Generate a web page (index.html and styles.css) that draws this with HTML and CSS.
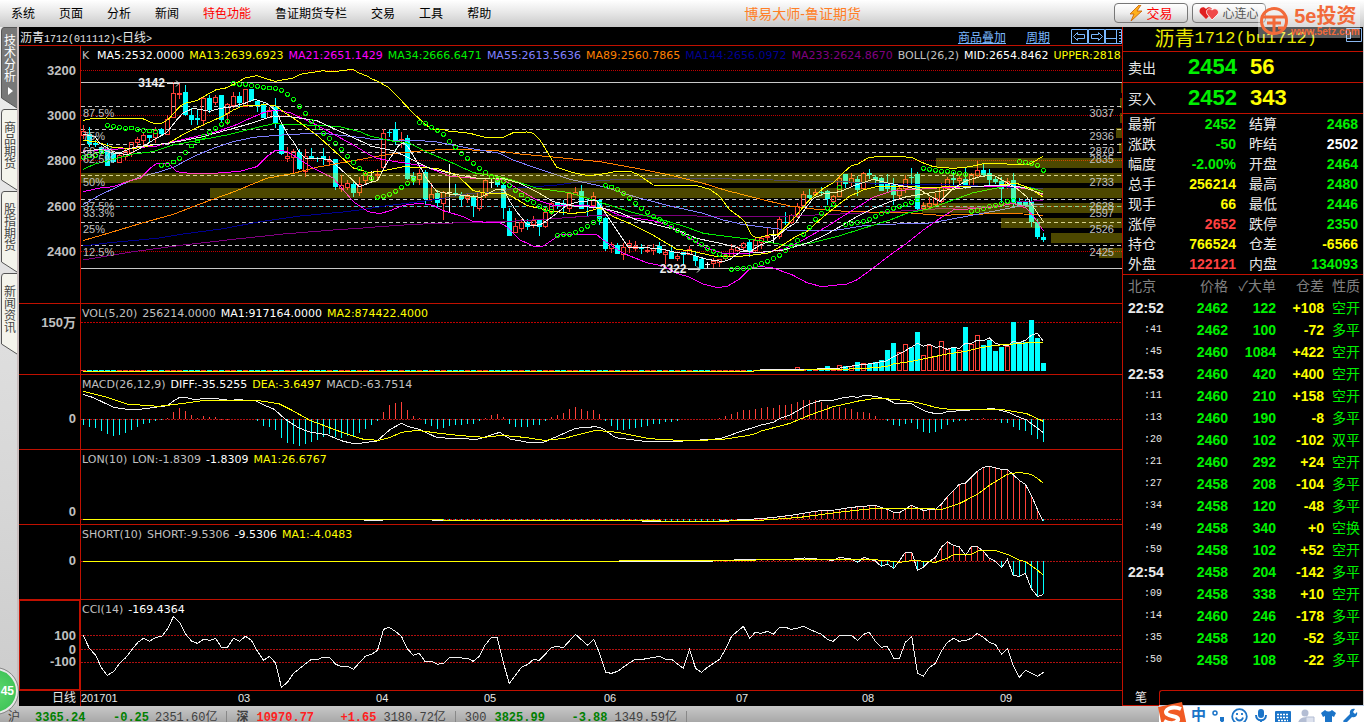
FILE: index.html
```html
<!DOCTYPE html>
<html lang="zh-CN">
<head>
<meta charset="utf-8">
<title>博易大师-鲁证期货</title>
<link rel="stylesheet" href="styles.css">
</head>
<body>
<div class="app">
  <header class="menubar">
    <nav class="menu">
      <button>系统</button><button>页面</button><button>分析</button><button>新闻</button><button class="hot">特色功能</button><button>鲁证期货专栏</button><button>交易</button><button>工具</button><button>帮助</button>
    </nav>
    <h1 class="app-title">博易大师-鲁证期货</h1>
    <div class="actions">
      <button class="pill trade"><svg width="14" height="16" viewBox="0 0 14 16"><path d="M10 0 1 9h4l-3 7 11-10H8l4-6z" fill="#ffb01c" stroke="#c45a00" stroke-width=".8"/></svg>交易</button>
      <button class="pill"><svg width="20" height="14" viewBox="0 0 20 14"><path d="M7 13 1 7C-1 3 4-1 7 3c3-4 8 0 6 4z" fill="#e02020"/><path d="M13 14 8 8c-2-4 2-7 5-4 3-3 8 0 6 4z" fill="#f04848" stroke="#fff" stroke-width=".8"/></svg>心连心</button>
    </div>
    <div class="watermark">
      <svg width="30" height="30" viewBox="0 0 30 30"><circle cx="15" cy="15" r="12.500" fill="none" stroke="#f26a3a" stroke-width="3"/><path d="M2 11h24M8 17h14M15 11v15M19 22h5" stroke="#f26a3a" stroke-width="3" fill="none"/></svg>
      <div><b>5e投资</b><span>www.5etz.com</span></div>
    </div>
  </header>

  <aside class="tabs">
    <button class="tab active"><svg viewBox="0 0 17 82" preserveAspectRatio="none"><path d="M17 .5H4Q1.500 .5 1.500 4V71L17 81"/></svg><span>技术分析</span><i></i></button>
    <button class="tab"><svg viewBox="0 0 17 82" preserveAspectRatio="none"><path d="M17 .5H4Q1.500 .5 1.500 4V71L17 81"/></svg><span>商品期货</span></button>
    <button class="tab"><svg viewBox="0 0 17 82" preserveAspectRatio="none"><path d="M17 .5H4Q1.500 .5 1.500 4V71L17 81"/></svg><span>股指期货</span></button>
    <button class="tab"><svg viewBox="0 0 17 82" preserveAspectRatio="none"><path d="M17 .5H4Q1.500 .5 1.500 4V71L17 81"/></svg><span>新闻资讯</span></button>
    <div class="ball">45</div>
  </aside>

  <main class="chart">
    <div class="chart-head">
      <div class="symbol">沥青<span>1712(011112)&lt;</span>日线<span>&gt;</span></div>
      <div class="links"><a href="#overlay">商品叠加</a><a href="#period">周期</a></div>
      <svg class="head-icons" width="51" height="15" viewBox="0 0 51 15" fill="none" stroke="#7ab8ff"><path d="M.5.5h16v14H.5zM17.500.5h16v14h-16zM34.500.5h16v14h-16zM2.500 7.500l4-4v2h7v4h-7v2zM31.500 7.500l-4-4v2h-7v4h7v2zM34 9.500h11M45.500 1v13M48 3.500h2M48 6.500h2M48 9.500h2M48 12.500h2"/></svg>
    </div>

    <section class="pane k">
      <div class="axis"><b style="top:9.700%">3200</b><b style="top:27.200%">3000</b><b style="top:44.700%">2800</b><b style="top:62.600%">2600</b><b style="top:80.200%">2400</b></div>
      <div class="plot">
        <svg id="kline" viewBox="0 -42 3123 771" preserveAspectRatio="none"></svg>
        <p class="legend"><span class="k-name">K</span><span class="w">MA5:2532.0000</span><span class="y">MA13:2639.6923</span><span class="m">MA21:2651.1429</span><span class="g">MA34:2666.6471</span><span class="v">MA55:2613.5636</span><span class="o">MA89:2560.7865</span><span class="n">MA144:2656.0972</span><span class="p">MA233:2624.8670</span><span>BOLL(26,2)</span><span class="w">MID:2654.8462</span><span class="y">UPPER:2818.1352</span></p>
        <div id="levels"></div>
        <span class="mark high">3142<svg width="13" height="7" viewBox="0 0 13 7"><path d="M0 3.500h12M9 .5l3 3-3 3" fill="none" stroke="#ddd"/></svg></span>
        <span class="mark low">2322<svg width="13" height="7" viewBox="0 0 13 7"><path d="M0 3.500h12M9 .5l3 3-3 3" fill="none" stroke="#ddd"/></svg></span>
      </div>
    </section>
    <section class="pane">
      <div class="axis"><b style="top:27%">150万</b></div>
      <div class="plot"><svg id="volume" viewBox="0 12 3123 210" preserveAspectRatio="none"></svg>
        <p class="legend"><span>VOL(5,20)</span><span>256214.0000</span><span class="w">MA1:917164.0000</span><span class="y">MA2:874422.4000</span></p></div>
    </section>
    <section class="pane">
      <div class="axis"><b style="top:60%">0</b></div>
      <div class="plot"><svg id="macd" viewBox="0 225 3123 222" preserveAspectRatio="none"></svg>
        <p class="legend"><span>MACD(26,12,9)</span><span class="w">DIFF:-35.5255</span><span class="y">DEA:-3.6497</span><span>MACD:-63.7514</span></p></div>
    </section>
    <section class="pane">
      <div class="axis"><b style="top:84%">0</b></div>
      <div class="plot"><svg id="lon" viewBox="0 450 3123 222" preserveAspectRatio="none"></svg>
        <p class="legend"><span>LON(10)</span><span>LON:-1.8309</span><span class="w">-1.8309</span><span class="y">MA1:26.6767</span></p></div>
    </section>
    <section class="pane">
      <div class="axis"><b style="top:49%">0</b></div>
      <div class="plot"><svg id="short" viewBox="0 15 3123 222" preserveAspectRatio="none"></svg>
        <p class="legend"><span>SHORT(10)</span><span>SHORT:-9.5306</span><span class="w">-9.5306</span><span class="y">MA1:-4.0483</span></p></div>
    </section>
    <section class="pane">
      <div class="axis selected"><b style="top:40%">100</b><b style="top:55%">0</b><b style="top:69%">-100</b></div>
      <div class="plot"><svg id="cci" viewBox="0 240 3123 270" preserveAspectRatio="none"></svg>
        <p class="legend"><span>CCI(14)</span><span class="w">-169.4364</span></p></div>
    </section>
    <div class="timeline">
      <div class="axis">日线</div>
      <div class="plot" id="months"></div>
    </div>
  </main>

  <section class="quote">
    <h2 class="contract">沥青<span>1712(bu1712)</span><svg width="16" height="14" viewBox="0 0 16 14"><path d="M.5.5h15v13H.5zM1 10.500h4M4.500 4v6" fill="none" stroke="#8cb8f0"/></svg></h2>
    <div class="depth"><span>卖出</span><b>2454</b><b class="y">56</b></div>
    <div class="depth"><span>买入</span><b>2452</b><b class="y">343</b></div>
    <table class="stats">
      <tr><th>最新</th><td class="g">2452</td><th>结算</th><td class="g">2468</td></tr>
      <tr><th>涨跌</th><td class="g">-50</td><th>昨结</th><td class="w">2502</td></tr>
      <tr><th>幅度</th><td class="g">-2.00%</td><th>开盘</th><td class="g">2464</td></tr>
      <tr><th>总手</th><td class="y">256214</td><th>最高</th><td class="g">2480</td></tr>
      <tr><th>现手</th><td class="y">66</td><th>最低</th><td class="g">2446</td></tr>
      <tr><th>涨停</th><td class="r">2652</td><th>跌停</th><td class="g">2350</td></tr>
      <tr><th>持仓</th><td class="y">766524</td><th>仓差</th><td class="y">-6566</td></tr>
      <tr><th>外盘</th><td class="r">122121</td><th>内盘</th><td class="g">134093</td></tr>
    </table>
    <table class="ticks">
      <thead><tr><th>北京</th><th>价格</th><th>✓大单</th><th>仓差</th><th>性质</th></tr></thead>
      <tbody id="ticks"></tbody>
    </table>
    <div class="quote-foot"><button>笔</button><div></div></div>
  </section>

  <footer class="status">
    <span class="i1">沪</span><b class="up i2">3365.24</b><b class="up i3">-0.25</b><b class="i4">2351.60亿</b><i></i><b>深</b><b class="dn i5">10970.77</b><b class="dn i6">+1.65</b><b class="i4">3180.72亿</b><i></i><b class="i4">300</b><b class="up i7">3825.99</b><b class="up i8">-3.88</b><b class="i4">1349.59亿</b><i></i>
  </footer>

  <div class="ime">
    <svg class="ime-logo" width="29" height="24" viewBox="0 0 29 24"><path d="M0 5 24 0l5 24H4z" fill="#f15a24"/><path d="M23 7C14 3 5 8 9 12c4 3 12 2 11 6-2 4-9 4-14 1" fill="none" stroke="#fff" stroke-width="4"/></svg>
    <b>中</b>
    <svg width="13" height="15" viewBox="0 0 13 15"><circle cx="3" cy="4" r="2" fill="none" stroke="#1b74c8" stroke-width="1.500"/><path d="M8 8h4v4l-3 3-1-1 1-2H8z" fill="#1b74c8"/></svg>
    <svg width="17" height="17" viewBox="0 0 17 17" fill="none" stroke="#1b74c8" stroke-width="1.800"><circle cx="8.500" cy="8.500" r="7.300"/><path d="M5 9.500c1 4 6 4 7 0M6 5v2M11 5v2"/></svg>
    <svg width="14" height="17" viewBox="0 0 14 17" fill="none" stroke="#1b74c8" stroke-width="2"><rect x="5" y="2" width="4" height="7" rx="2" fill="#1b74c8"/><path d="M2 7c0 7 10 7 10 0M7 12v4M4 16h6"/></svg>
    <svg width="18" height="14" viewBox="0 0 18 14"><rect x="1" y="2" width="16" height="12" rx="1" fill="#1b74c8"/><path d="M3 5.500h12M3 8.500h12M4 11.500h10" stroke="#fff" stroke-width="1.500" stroke-dasharray="2 1"/></svg>
    <svg width="17" height="17" viewBox="0 0 17 17"><circle cx="7" cy="5" r="3.500" fill="#b3bdd3"/><path d="M0 16c0-9 14-9 14 0z" fill="#b3bdd3"/><path d="M8 9h8v7H8z" fill="#dde2ee" stroke="#b3bdd3"/></svg>
    <svg width="15" height="15" viewBox="0 0 15 15"><path d="M0 4 4 1q3.500 3 7 0l4 3-2 4-2-1v8H4V7L2 8z" fill="#1b74c8"/></svg>
    <svg width="16" height="16" viewBox="0 0 16 16"><path d="M1 13 8 6C7 2 10 0 13 1l-2 3 2 2 2-2c1 4-2 6-5 5l-7 7z" fill="#1b74c8"/></svg>
  </div>
</div>
<script src="chart.js"></script>
</body>
</html>
```

FILE: styles.css
```css
* { box-sizing: border-box; }
html, body { margin: 0; height: 100%; }
body { background: #000; overflow: hidden; font: 12px "Liberation Sans", "Noto Sans CJK SC", sans-serif; }
button { border: 0; background: none; padding: 0; font: inherit; color: inherit; }
h1, h2, p { margin: 0; font-weight: 400; }

.app {
  position: relative;
  display: grid;
  height: 100vh;
  grid-template: 27px minmax(0, 1fr) 16px / 19px minmax(0, 1fr) 242px;
}

.w { color: #fff; }
.y { color: #ff0; }
.m { color: #f0f; }
.g { color: #00f000; }
.v { color: #8080ff; }
.o { color: #ff8000; }
.n { color: #000090; }
.p { color: #800080; }
.r { color: #ff4040; }

/* menu bar */
.menubar {
  grid-column: 1 / -1;
  position: relative;
  display: grid;
  grid-template-columns: auto 1fr auto;
  align-items: center;
  padding: 0 98px 2px 11px;
  background: linear-gradient(#fff, #e8e8e8 45%, #c8c8c8);
  color: #000;
}
.menu { display: flex; gap: 24px; white-space: nowrap; }
.menu .hot { color: #f00; }
.app-title { font-size: 14px; color: #ff7f27; text-align: center; }
.actions { display: flex; justify-content: flex-end; gap: 4px; }
.pill {
  display: flex;
  align-items: center;
  justify-content: center;
  gap: 3px;
  width: 74px;
  height: 20px;
  border: 1px solid #777;
  border-radius: 4px;
  background: linear-gradient(#fff, #eee 50%, #ccc);
  color: #555;
}
.trade { color: #f00; font-size: 13px; }
.watermark {
  position: absolute;
  z-index: 3;
  right: 4px;
  top: 4px;
  width: 102px;
  height: 34px;
  display: flex;
  align-items: center;
  gap: 2px;
  padding-left: 1px;
  background: rgba(255, 255, 255, .35);
  color: #f26a3a;
}
.watermark div { display: flex; flex-direction: column; align-items: center; }
.watermark b { font-size: 20px; line-height: 20px; }
.watermark span { font-size: 10px; line-height: 11px; font-weight: 700; }

/* side tabs */
.tabs {
  position: relative;
  display: flex;
  flex-direction: column;
  background: linear-gradient(#eee, #ccc);
  border-right: 2px solid #c8bcbc;
}
.tab {
  position: relative;
  display: flex;
  flex-direction: column;
  align-items: center;
  flex: none;
  height: 82px;
  padding: 13px 0 0 3px;
  color: #444;
}
.tab svg { position: absolute; inset: 0; width: 100%; height: 100%; fill: #f4f4ec; stroke: #555; }
.tab.active svg { fill: #787878; }
.tab.active { color: #fff; padding-top: 8px; }
.tab span { position: relative; width: 12px; line-height: 12px; }
.tab i { position: relative; border: 4px solid transparent; border-left: 5px solid #fff; margin: 4px 0 0 4px; }
.ball {
  position: absolute;
  left: -28px;
  bottom: -8px;
  width: 46px;
  height: 46px;
  padding-right: 2px;
  border-radius: 50%;
  border: 2px solid #e8e8e8;
  outline: 1px solid #888;
  background: radial-gradient(#5ed86e, #35bd50);
  color: #fff;
  font-weight: 700;
  line-height: 42px;
  text-align: right;
}

/* chart */
.chart {
  display: grid;
  grid-template-rows: 19px minmax(0, 258fr) minmax(0, 71fr) repeat(3, minmax(0, 75fr)) minmax(0, 91fr) 15px;
  min-width: 0;
  color: #c0c0c0;
}
.chart-head {
  display: flex;
  align-items: center;
  border-bottom: 1px solid #c01000;
  padding-left: 1px;
  color: #e8e8e8;
}
.head-icons { flex: none; }
.symbol { flex: 1; }
.symbol span { font: 10px "Liberation Mono", monospace; }
.links { display: flex; gap: 20px; margin-right: 21px; }
.links a { color: #7ab8ff; }
.pane { display: flex; min-height: 0; border-bottom: 1px solid #c01000; }
.axis { position: relative; flex: none; width: 62px; border-right: 1px solid #c01000; }
.axis.selected { box-shadow: inset 0 0 0 1px #c01000; }
.axis b { position: absolute; right: 4px; line-height: 14px; margin-top: -7px; font-size: 13px; }
.plot { position: relative; flex: 1; min-width: 0; overflow: hidden; }
.plot > svg { display: block; width: 100%; height: 100%; shape-rendering: crispEdges; }
.legend {
  position: absolute;
  left: 1px;
  top: 3px;
  display: flex;
  gap: 5px;
  font: 11px/14px "DejaVu Sans", sans-serif;
  white-space: nowrap;
}
.k-name { width: 10px; }
.level {
  position: absolute;
  margin-top: -7px;
  font: 11px/14px "Liberation Sans", sans-serif;
}
.level.left { left: 2px; }
.level.right { right: 8px; }
.mark {
  position: absolute;
  display: flex;
  align-items: center;
  gap: 2px;
  margin-top: -7px;
  color: #eee;
  font: 700 12px/14px "Liberation Sans", sans-serif;
}
.high { left: 5.500%; top: 14.500%; }
.low { left: 55.600%; top: 86.800%; }
.timeline { display: flex; line-height: 14px; color: #e8e8e8; }
.timeline .axis { text-align: right; padding-right: 4px; }
.timeline time { position: absolute; font-size: 11px; }

/* quote panel */
.quote {
  display: flex;
  flex-direction: column;
  min-width: 0;
  border-left: 1px solid #c01000;
  border-right: 1px solid #ccc;
  color: #e8e8e8;
  font-size: 14px;
}
.contract {
  display: flex;
  justify-content: flex-end;
  align-items: center;
  height: 25px;
  border-bottom: 1px solid #c01000;
  color: #e8e800;
  font-size: 20px;
  line-height: 24px;
}
.contract span { font: 17px/24px "Liberation Mono", monospace; }
.contract svg { margin: 0 1px 9px 29px; }
.depth {
  display: grid;
  grid-template-columns: 55px 52px 1fr;
  column-gap: 5px;
  align-items: center;
  height: 31px;
  padding-left: 5px;
  border-bottom: 1px solid #c01000;
  color: #e8e8e8;
}
.depth b { font-size: 22px; color: #00f000; }
.depth b.y { color: #ff0; padding-left: 5px; }
.stats, .ticks { border-collapse: collapse; table-layout: fixed; width: 100%; }
.stats th, .stats td, .ticks th, .ticks td { padding: 0; line-height: 18px; }
.stats { border-bottom: 1px solid #c01000; }
.stats tr { height: 20px; }
.stats th { width: 47px; padding-left: 5px; text-align: left; font-weight: 400; }
.stats td { width: 66px; text-align: right; font-weight: 700; }
.stats th:nth-child(3) { width: 60px; padding-left: 13px; }
.stats td:nth-child(4) { width: auto; padding-right: 5px; }
.ticks tr { height: 22px; }
.ticks th { color: #808080; font-weight: 400; text-align: right; }
.ticks td { text-align: right; font-weight: 700; color: #00f000; }
.ticks th:nth-child(1) { width: 45px; text-align: left; padding-left: 5px; }
.ticks th:nth-child(2) { width: 60px; }
.ticks th:nth-child(3) { width: 48px; }
.ticks th:nth-child(4) { width: 48px; }
.ticks th:nth-child(5), .ticks td:nth-child(5) { padding-right: 3px; font-weight: 400; }
.ticks td:nth-child(4) { color: #ff0; }
.ticks td:nth-child(1) { color: #e8e8e8; text-align: left; padding-left: 5px; white-space: nowrap; }
.ticks td.sec:nth-child(1) { font: 10px/18px "Liberation Mono", monospace; padding-left: 21px; }
.quote-foot { flex: none; display: flex; margin-top: auto; height: 16px; font-size: 12px; border-bottom: 1px solid #c01000; }
.quote-foot button { width: 36px; line-height: 14px; }
.quote-foot div { flex: 1; border: solid #c01000; border-width: 1px 0 0 1px; border-radius: 3px 0 0; }

/* status bar */
.status {
  grid-column: 1 / -1;
  display: flex;
  align-items: flex-start;
  overflow: hidden;
  padding: 5px 0 0 8px;
  background: linear-gradient(#c8c8c8, #a8a8a8);
  color: #404040;
  font: 12px/15px "Liberation Mono", "Noto Sans CJK SC", monospace;
  white-space: nowrap;
}
.status > i { width: 1px; height: 12px; margin: 0 9px; background: #888; flex: none; }
.status .up { color: #008000; }
.status .dn { color: #ff2020; }
.i1 { width: 27px; }
.i2 { width: 78px; }
.i3 { width: 42px; }
.status .i4 { font-weight: 400; }
.i5, .i7 { margin-left: 8px; }
.i5 { width: 84px; }
.i6 { width: 43px; }
.i7 { width: 77px; }
.i8 { width: 43px; }

/* input-method toolbar */
.ime {
  position: absolute;
  right: 0;
  bottom: -8px;
  z-index: 3;
  display: flex;
  align-items: center;
  gap: 6px;
  width: 205px;
  height: 25px;
  border-top: 1px solid #b8cce8;
  background: #fff;
  color: #1b74c8;
}
.ime b { font-size: 15px; line-height: 20px; margin-top: -6px; }
.ime svg { flex: none; margin-top: -4px; }
.ime .ime-logo { margin: -8px -2px 0 -1px; }
```

FILE: chart.js
```js
// Drawing units are thirds of a pixel; candles are 18 units apart.
const NS = 'http://www.w3.org/2000/svg';
const STEP = 18, FIRST = 7.5, WIDTH = 3123;
const RED = '#ff4038', CYAN = '#00ffff';
const xAt = i => FIRST + STEP * i;

function add(svg, name, attrs) {
  const el = document.createElementNS(NS, name);
  for (const k in attrs) el.setAttribute(k, attrs[k]);
  svg.appendChild(el);
}
const get = id => document.getElementById(id);
function hline(svg, y, stroke, dash) {
  add(svg, 'path', { d: `M0 ${y}H${WIDTH}`, stroke, 'stroke-width': 3, 'stroke-dasharray': dash || 'none' });
}
function box(svg, x, y, width, height, fill) {
  add(svg, 'rect', { x, y, width, height: Math.max(height, 3), fill });
}

// Each section is [x offset, x scale, y offset, "x,y x,y ..."].
function points(sections) {
  return sections.flatMap(([ox, sx, dy, text]) => text.split(' ').map(p => {
    const [x, y] = p.split(',').map(Number);
    return [ox + x * sx, y + dy];
  }));
}
function curve(svg, stroke, sections) {
  const pts = points(sections);
  add(svg, 'polyline', { points: pts.join(' '), fill: 'none', stroke, 'stroke-width': 3 });
  return pts;
}
function valueAt(pts, x) {
  for (let n = 1; n < pts.length; n++) {
    const [x0, y0] = pts[n - 1], [x1, y1] = pts[n];
    if (x <= x1 && x1 > x0) return y0 + (y1 - y0) * (x - x0) / (x1 - x0);
  }
  return pts[pts.length - 1][1];
}

// kind high bodyTop bodyBottom low
const candles = `r195,215,225,238 c200,222,253,262 c240,250,254,262 c258,262,276,282 c250,268,317,318 c275,280,307,308 r275,285,307,308 r265,274,290,300 r245,247,278,290 r230,238,248,262
r215,225,240,255 c224,226,234,245 r200,212,232,250 c205,208,222,224 r165,178,222,224 r65,100,172,175 r68,100,104,118 c75,96,166,168 c145,165,179,195 c150,174,180,195
r112,116,180,198 c105,115,150,158 r105,112,128,136 c104,105,179,185 r130,133,160,195 r95,108,135,145 c95,108,130,140 r86,88,138,140 c86,88,122,124 c120,124,135,155
c128,135,173,175 r140,150,172,175 c115,140,192,205 c190,194,283,286 r260,290,296,305 r268,275,293,342 c268,275,328,330 r268,290,335,350 c265,288,293,296 c290,293,298,305
c265,288,296,315 r288,300,303,318 c297,298,380,390 r345,375,384,395 r360,371,382,390 c362,372,398,412 r352,374,398,408 r335,340,362,372 w333,337,340,370 r328,343,346,358
r208,220,322,328 c210,216,220,232 c186,208,242,255 r215,238,242,265 c226,234,356,360 c335,348,360,375 r328,340,358,375 c330,336,418,432 r370,402,417,425 c390,398,428,440
r392,396,430,480 w312,397,400,458 c372,398,406,412 c395,402,417,437 r398,410,415,430 c405,410,438,470 r390,396,446,452 r358,362,406,415 w355,366,368,384 c355,360,374,380
c370,374,443,476 c445,453,527,528 r475,498,517,518 r478,487,506,515 c478,487,500,510 r468,480,492,505 c478,480,500,527 r445,457,500,503 r425,430,455,465 c425,430,434,446
c420,428,434,466 r395,400,446,455 r382,396,402,405 c376,394,446,448 c418,434,440,467 r396,410,436,448 c418,420,478,495 c470,474,567,572 r545,554,566,578 c550,556,581,582
r548,562,583,600 r540,550,560,580 r543,560,564,572 c552,562,566,582 r556,571,574,578 r552,566,568,585 c547,558,579,582 r570,576,584,612 c562,572,597,598 r582,590,595,604
c575,577,586,615 r558,568,584,586 c573,588,603,618 c590,596,626,628 w605,612,614,625 r595,604,610,624 r596,598,608,620 r580,586,594,600 r552,568,588,590 r558,562,570,576
r545,550,563,572 c540,546,575,590 r535,540,572,575 r530,534,548,568 r505,528,532,545 w510,525,528,548 r470,478,530,536 c456,486,490,496 r462,466,486,492 r430,440,468,475
r392,402,437,440 c388,404,414,420 r388,396,402,405 c382,396,400,408 c390,394,418,435 r405,410,425,432 r345,355,408,412 c342,343,372,384 r340,356,366,380 c348,357,389,408
r335,340,385,388 c328,338,344,356 c345,350,360,375 c352,355,392,394 c342,373,388,398 c355,373,405,435 r380,385,406,420 r345,358,385,400 c324,350,354,375 c335,342,446,455
r425,437,445,450 r410,430,440,448 r400,415,432,440 r370,382,425,428 r352,358,385,390 c335,354,360,375 r345,355,360,375 c320,358,380,388 r338,343,378,382 r302,330,345,352
c310,330,344,348 c328,338,360,375 c350,358,366,372 c350,364,388,430 r355,363,378,388 c338,360,432,444 c415,427,438,440 c418,426,434,440 c410,425,486,500 c478,486,530,536
c520,531,540,546`.split(/\s+/).map(s => [s[0], ...s.slice(1).split(',').map(Number)]);

function drawKline() {
  const svg = get('kline');
  [31, 166, 301, 439, 574].forEach(y => hline(svg, y, '#c00000', '3 3'));
  hline(svg, 439, '#60c8d0', '12 9');
  [139, 208, 253, 277, 346, 418, 487, 556].forEach(y => hline(svg, y, '#c8c8c8', '12 9'));
  [67, 625].forEach(y => hline(svg, y, '#c8c8c8'));

  candles.forEach(([kind, high, top, bottom, low], i) => {
    const x = xAt(i), h = Math.max(bottom - top, 4);
    const color = kind === 'r' ? RED : kind === 'c' ? CYAN : '#fff';
    if (kind === 'r') {
      add(svg, 'path', { d: `M${x} ${high}V${top}M${x} ${top + h}V${low}`, stroke: color, 'stroke-width': 3 });
      add(svg, 'rect', { x: x - 6, y: top, width: 12, height: h, fill: 'none', stroke: color, 'stroke-width': 3 });
    } else {
      box(svg, x - 1.5, high, 3, low - high, color);
      box(svg, x - 7.5, top, 15, kind === 'w' ? 3 : h, color);
    }
  });

  const A = -243, B = 867, C = 1977;
  const three = (color, a, b, c) => curve(svg, color, [[A, 1, 0, a], [B, 1, 0, b], [C, 1, 0, c]]);
  three('#000090', '249,558 330,548 470,535 550,522 670,506 780,485 900,468 1040,455 1105,446',
    '0,445 60,436 150,425 220,415 300,400 390,396 430,385 560,375 610,368 720,360 900,355 1000,355 1130,358',
    '0,358 100,360 200,364 330,366 450,372 600,374 770,380 910,385');
  three('#800080', '249,600 400,575 550,555 700,538 850,522 1000,510 1105,503',
    '0,502 130,493 280,488 420,484 520,478 700,465 850,466 1110,470',
    '0,469 150,468 300,462 450,455 620,445 750,440 830,425 910,422');
  three('#ff8000', '249,542 330,518 430,488 520,463 600,432 700,396 800,355 880,340 950,322 1060,302 1105,294',
    '0,292 80,280 160,272 230,268 380,272 450,282 560,292 690,305 800,325 900,345 1000,370 1080,395 1105,400',
    '0,402 80,422 150,438 230,448 330,455 500,458 600,466 700,463 790,460 850,462 910,466');
  three('#8080ff', '249,434 300,405 370,372 420,350 480,335 520,322 580,290 640,265 700,245 760,232 830,226 900,222 970,220 1040,228 1105,235',
    '0,237 60,240 130,240 200,246 300,265 390,280 430,300 500,325 600,358 700,380 800,412 900,438 1000,460 1060,480 1105,490',
    '0,492 60,500 150,511 280,512 380,496 470,492 560,490 620,480 700,465 780,450 840,438 910,432');
  three('#00f000', '249,328 285,312 340,298 400,282 460,275 520,255 600,240 680,225 760,205 820,191 880,194 960,196 1020,200 1080,215 1105,226',
    '0,228 60,242 120,250 180,280 250,310 310,338 400,352 500,385 600,398 700,430 780,455 860,475 940,498 1000,520 1100,533',
    '0,534 60,542 140,556 210,550 290,530 360,508 450,480 500,460 560,448 640,420 700,398 740,390 800,378 870,383 910,395');
  three('#f0f', '249,272 340,268 400,264 470,258 500,250 560,236 650,215 700,198 750,175 790,158 825,150 870,158 940,190 1000,222 1060,255 1105,282',
    '0,285 20,295 60,302 160,318 240,348 300,354 400,358 440,385 500,420 550,436 640,435 700,445 760,470 850,482 900,498 960,535 1000,560 1060,580 1105,580',
    '0,580 60,578 130,568 180,545 260,500 330,455 400,412 460,392 530,388 620,382 700,380 800,378 870,388 910,405');
  three('#f0f', '249,395 300,384 340,380 390,362 420,355 450,325 470,310 505,310 530,335 570,340 640,340 720,334 770,320 800,290 828,270 860,274 890,292 940,325 1000,355 1060,425 1105,455',
    '0,456 30,461 60,452 100,436 150,430 190,436 220,452 280,470 310,485 390,488 410,500 450,540 490,558 520,558 550,538 570,525 610,522 680,524 700,540 760,580 830,608 880,618 920,640 960,652 1000,672 1040,682 1070,680 1090,668 1108,658',
    '0,655 30,625 60,619 100,624 160,646 200,668 245,680 320,672 350,660 400,624 450,585 500,550 550,510 600,475 640,450 700,446 770,440 820,430 860,445 885,475 910,512');
  three('#ff0', '249,181 270,177 320,174 380,177 428,176 455,188 470,192 490,188 505,178 530,150 545,135 555,130 590,122 625,102 650,88 672,86 700,74 735,54 770,47 795,55 825,64 880,54 900,43 970,32 990,36 1060,28 1075,38 1105,50',
    '0,54 25,65 55,82 85,112 130,160 165,192 185,208 220,208 235,213 300,220 345,232 400,232 430,218 470,216 490,220 510,240 560,322 610,338 655,347 705,341 740,334 780,334 805,344 850,375 985,378 1020,388 1050,410 1080,450 1108,470',
    '0,472 15,485 35,525 50,534 100,522 112,525 140,498 170,465 205,423 250,385 280,368 310,338 335,316 350,314 385,293 420,289 480,290 515,292 540,305 580,320 640,325 690,320 735,310 800,312 840,313 870,312 910,288');
  three('#ff0', '249,242 285,244 340,262 400,266 460,255 505,250 545,226 580,208 620,190 670,168 700,150 735,135 760,138 790,134 825,136 850,155 900,188 950,225 1000,270 1060,324 1105,337',
    '0,337 30,334 70,326 100,320 140,322 200,325 230,335 260,344 310,392 350,400 410,402 430,412 470,436 540,453 600,460 640,458 690,444 730,470 790,495 850,526 920,568 960,572 1040,590 1100,590',
    '0,589 50,584 90,578 120,560 170,528 200,515 250,470 300,430 330,408 370,390 410,380 450,378 500,378 560,384 620,380 700,380 780,375 830,370 870,385 910,412');
  three('#f0f0f0', '249,274 300,268 350,282 400,262 450,255 505,250 600,232 700,205 760,188 820,168 870,170 950,182 1000,205 1050,228 1105,254',
    '0,258 70,272 130,300 180,325 250,342 330,356 400,356 450,370 500,395 550,425 620,440 690,442 750,458 800,480 860,495 920,510 980,535 1060,552 1100,562',
    '0,568 50,578 130,570 200,550 250,528 300,500 350,470 400,445 450,425 500,410 560,400 620,390 700,380 780,375 850,382 910,402');
  three('#f0f0f0', '249,222 285,230 300,250 340,275 380,285 420,265 460,240 500,218 530,180 550,158 580,145 630,154 660,145 690,142 740,128 765,118 800,130 828,152 845,190 865,226 880,245 900,280 915,294 990,298 1030,335 1060,362 1078,380 1105,370',
    '0,368 22,362 50,310 85,258 100,248 115,262 150,320 170,356 200,394 240,402 300,408 330,412 380,388 400,388 420,425 440,455 470,492 490,498 515,492 550,468 590,436 630,424 680,422 700,450 740,510 775,562 820,562 880,568 920,578 960,582 1010,598 1060,605 1080,598 1105,580',
    '0,576 30,575 60,555 100,540 140,505 165,490 200,440 220,415 250,402 300,395 340,378 400,358 440,368 500,380 540,390 600,425 640,385 680,362 720,350 760,345 790,362 830,385 860,410 910,485');

  // parabolic SAR
  const sar = [292, 288, 286, 276, 196, 199, 202, 205, 204, 208, 212, 213, 215, 316, 314, 306, 295, 278, 258, 243, 230, 217, 205, 193, 184,
    71, 73, 73, 77, 79, 82, 84, 85, 91, 103, 118, 139, 160, 184, 203, 220, 236, 251, 268, 289, 308, 325, 340, 355,
    412, 409, 403, 394, 382, 370, 358, 188, 190, 202, 211, 223, 245, 262, 281, 295, 310, 325, 338, 350, 358, 364, 376, 391, 405, 418, 428, 439, 448, 454,
    526, 523, 523, 517, 508, 499, 488, 478, 376, 381, 388, 400, 415, 430, 445, 457, 469, 478, 487, 499, 511, 520, 532, 541, 553, 565, 574, 583, 590,
    628, 626, 626, 622, 617, 611, 604, 596, 586, 572, 556, 542, 523, 502, 478, 460, 445, 433, 383,
    494, 490, 488, 484, 478, 469, 461, 454, 445, 439, 433, 427, 420, 325, 328, 331, 334, 334, 337, 340, 343,
    454, 452, 446, 440, 436, 430, 424, 422, 305, 307, 310, 316, 331];
  sar.forEach((cy, i) => add(svg, 'circle', { cx: xAt(i), cy, r: 6, fill: 'none', stroke: '#00ff00', 'stroke-width': 3 }));

  // volume-by-price bands
  [[0, 339], [387, 384], [2565, 294], [2522, 429], [2760, 474], [2910, 519], [3054, 564],
    [3120, 68], [3117, 113], [3117, 158], [3105, 204], [3114, 249]].forEach(([x, y]) =>
    box(svg, x, y, WIDTH - x, 30, 'rgba(255,240,0,.3)'));
}

function drawVolume() {
  const svg = get('volume');
  hline(svg, 67, '#c00000', '6 3');
  const tops = [210, 210, 208, 208, 208, 210, 202, 209, 209, 209, 209, 198, 207, 196, 198, 199, 186, 190, 193, 186, 180, 150, 129, 156, 133, 141, 96,
    166, 135, 169, 124, 146, 142, 151, 81, 133, 106, 135, 120, 153, 141, 138, 66, 127, 126, 60, 114, 189];
  candles.forEach(([kind], i) => {
    const top = i < 113 ? 210 : tops[i - 113], x = xAt(i);
    if (kind === 'r' && top < 205) {
      add(svg, 'rect', { x: x - 6, y: top + 1, width: 12, height: 211 - top, fill: 'none', stroke: RED, 'stroke-width': 3 });
    } else {
      box(svg, x - 7.5, top, 15, 213 - top, kind === 'r' ? RED : CYAN);
    }
  });
  curve(svg, '#f0f0f0', [[2037, 1, 0, '0,210 150,208 240,204 290,196 340,190 382,182 400,170 436,152 454,142 472,130 490,139 508,133 526,142 544,140 562,148 580,142 598,145 616,130 634,130 652,120 676,120 688,114 706,130 742,138 760,124 778,128 796,121 814,106 832,100 850,124']]);
  curve(svg, '#ff0', [[0, 1, 0, '7,214 2000,214'], [2037, 1, 0, '0,212 200,209 300,206 345,203 382,199 400,192 454,184 508,173 562,162 616,154 652,145 706,136 760,132 796,129 814,127 850,127']]);
}

function bars(svg, base, ends) {
  ends.forEach((y, i) => {
    const d = y - base;
    if (Math.abs(d) < 1) return;
    box(svg, xAt(i) - 1.5, d < 0 ? y : base, 3, Math.abs(d), d < 0 ? RED : CYAN);
  });
}

function drawMacd() {
  const svg = get('macd');
  hline(svg, 358, '#b01010', '6 3');
  const early = [165, 171, 174, 183, 192, 198, 195, 189, 180, 171, 162, 159, 153, 150, 144, 126, 114, 123, 135, 144, 138, 141, 141, 147, 148, 149, 149, 149, 149,
    155, 168, 171, 180, 204, 219, 222, 228, 222, 216, 210, 201, 192, 201, 204, 198, 200, 189, 177, 165, 153, 126, 105, 99, 96, 120, 138, 144,
    162, 168, 177, 174, 168, 165, 165, 162, 162, 153, 144, 135, 132, 141, 162, 171, 171, 171, 165, 165, 153, 141, 135, 129, 117, 111, 117, 123, 120, 132,
    155, 168, 180, 180, 177, 174, 171, 168, 162, 162, 156, 156, 153, 149, 149, 149, 149, 149, 149, 144, 138, 132, 126, 120, 120, 117].map(y => y + 209);
  const late = [324, 321, 324, 315, 315, 312, 306, 300, 300, 300, 306, 315, 324, 321, 324, 327, 336, 336, 339, 348, 358, 362, 374, 377, 371, 368,
    386, 395, 398, 395, 386, 374, 365, 362, 362, 359, 359, 354, 358, 359, 368, 368, 380, 389, 392, 404, 416, 425];
  bars(svg, 358, early.concat(late));
  curve(svg, '#f0f0f0', [[-63, 1.339, 210, '52,73 75,83 120,112 150,118 185,117 240,107 255,92 268,82 280,82 305,90 320,85 350,86 380,91 400,89 440,93 455,104 480,118 505,148 535,174 560,186 600,195 630,212 660,222 710,213 740,178 765,160 780,170 805,178 845,203 935,208 985,187 1010,208 1045,216 1085,216 1155,175 1200,170 1215,175 1245,203 1310,214 1400,213 1480,206 1530,182 1560,170'],
    [2037, 1, 0, '0,376 40,367 60,355 90,345 130,322 150,312 185,301 220,301 240,295 275,290 292,292 315,286 345,289 382,298 405,310 455,311 472,322 500,335 526,341 545,341 560,335 630,330 700,326 745,337 765,347 800,360 850,398']]);
  curve(svg, '#ff0', [[-63, 1.339, 210, '52,64 100,80 150,102 220,109 260,103 320,92 440,91 490,101 520,121 560,151 600,171 640,191 680,208 715,211 740,202 765,187 800,181 850,190 900,197 950,202 990,196 1040,202 1085,211 1130,205 1200,181 1250,187 1320,206 1400,212 1480,209 1540,197 1560,190'],
    [2037, 1, 0, '0,394 90,370 150,345 220,320 300,302 355,294 420,300 470,307 530,323 570,328 730,329 800,341 850,364']]);
}

function histogramOf(svg, base, sections) {
  const pts = points(sections);
  bars(svg, base, candles.map((_, i) => valueAt(pts, xAt(i))));
  curve(svg, '#f0f0f0', sections);
}

function drawLon() {
  const svg = get('lon');
  hline(svg, 658, '#b01010', '6 3');
  histogramOf(svg, 658, [[0, 1, 0, '7,658 830,658 860,661 1000,658 1080,661 1650,661 1700,664 1900,664'],
    [2037, 1, 0, '0,656 60,650 100,645 185,631 225,630 275,622 345,616 382,628 400,637 420,637 454,616 490,631 526,628 544,613 562,590 598,553 616,550 652,514 670,502 688,499 724,508 742,508 778,541 796,553 814,586 832,628 850,664']]);
  curve(svg, '#ff0', [[0, 1, 0, '7,658 1075,658 1090,661 1700,661 1760,664 1900,664'],
    [2037, 1, 0, '0,661 120,652 250,635 345,625 480,625 545,628 600,610 652,583 688,556 742,523 778,517 814,523 832,535 850,550']]);
}

function drawShort() {
  const svg = get('short');
  hline(svg, 124, '#b01010', '6 3');
  histogramOf(svg, 124, [[0, 1, 0, '7,124 1430,124'], [1437, 1.079, 0, '0,124 445,123 510,118 560,118 620,120 680,114 760,121 778,112 810,117 828,127 844,112 877,123 893,139 910,132 928,145 944,122 960,97 978,97 994,151 1010,142 1027,124 1044,112 1060,82 1077,65 1094,76 1110,80 1128,106 1144,79 1160,79 1177,94 1194,115 1210,124 1228,142 1244,118 1260,166 1277,169 1294,160 1310,205 1328,230 1344,223']]);
  curve(svg, '#ff0', [[0, 1, 0, '7,124 1430,124'], [1437, 1.079, 0, '0,124 500,121 640,118 860,118 910,122 944,127 985,121 1044,127 1077,115 1094,104 1144,103 1165,91 1210,91 1244,103 1277,121 1294,124 1328,151 1344,166']]);
}

function drawCci() {
  const svg = get('cci');
  [346, 388, 427].forEach(y => hline(svg, y, '#b01010', '6 3'));
  curve(svg, '#f0f0f0', [[-243, 1.0714, 0, '233,346 250,385 268,406 284,443 300,466 318,455 335,430 352,413 370,388 386,367 402,355 419,364 436,352 453,349 470,325 486,289 503,308 520,343 537,364 553,370 570,358 588,361 604,355 620,382 637,382 654,355 671,364 687,349 704,361 721,394 738,421 755,409 772,430 788,502 805,487 822,460 850,436 872,418 890,418 905,412 923,412 940,433 955,439 973,439 990,448 1007,427 1023,409 1040,403 1057,391 1074,328 1090,322 1107,334 1124,349 1140,385 1157,406 1174,400 1190,424 1208,424 1225,433 1242,430 1260,412 1310,415 1325,424 1342,409 1358,376 1376,352 1392,352 1410,430 1426,490 1443,466 1460,442 1478,433 1494,418 1510,421 1545,382 1565,379'],
    [1437, 1.079, 0, '0,381 10,382 43,343 77,376 94,358 110,400 127,457 143,460 160,454 195,427 210,418 230,418 277,409 293,418 310,418 343,445 360,388 377,445 393,457 410,442 444,418 460,388 477,349 510,319 527,355 543,337 560,340 577,334 593,343 610,322 627,322 643,328 660,325 677,319 694,328 727,343 743,358 760,364 777,346 810,346 827,361 844,343 860,337 877,364 893,382 910,379 928,415 944,415 960,367 978,349 994,460 1010,469 1027,442 1044,430 1060,394 1077,367 1094,355 1110,364 1128,361 1144,355 1160,340 1177,352 1194,367 1210,373 1228,403 1244,385 1260,436 1277,472 1294,451 1328,469 1344,457']]);
}

drawKline();
drawVolume();
drawMacd();
drawLon();
drawShort();
drawCci();

const levels = [[159, '87.5%', 3037], [228, '75%', 2936], [273, '66.7%', 2870], [297, '62.5%', 2835], [366, '50%', 2733],
  [438, '37.5%', 2628], [459, '33.3%', 2597], [507, '25%', 2526], [576, '12.5%', 2425]];
get('levels').innerHTML = levels.map(([y, pct, price]) => {
  const top = ((y + 42) / 7.71).toFixed(2);
  return `<span class="level left" style="top:${top}%">${pct}</span><span class="level right" style="top:${top}%">${price}</span>`;
}).join('');

const months = [['201701', 0], ['03', 157], ['04', 295], ['05', 403], ['06', 523], ['07', 655], ['08', 781], ['09', 919]];
get('months').innerHTML = months.map(([name, x]) => `<time style="left:${(x / 10.41).toFixed(2)}%">${name}</time>`).join('');

const ticks = `22:52 2462 122 +108 空开
:41 2462 100 -72 多平
:45 2460 1084 +422 空开
22:53 2460 420 +400 空开
:11 2460 210 +158 空开
:13 2460 190 -8 多平
:20 2460 102 -102 双平
:21 2460 292 +24 空开
:27 2458 208 -104 多平
:34 2458 120 -48 多平
:49 2458 340 +0 空换
:59 2458 102 +52 空开
22:54 2458 204 -142 多平
:09 2458 338 +10 空开
:14 2460 246 -178 多平
:35 2458 120 -52 多平
:50 2458 108 -22 多平`;
get('ticks').innerHTML = ticks.split('\n').map(row => {
  const [time, ...rest] = row.split(' ');
  return `<tr><td${time[0] === ':' ? ' class="sec"' : ''}>${time}</td>${rest.map(v => `<td>${v}</td>`).join('')}</tr>`;
}).join('');
```
